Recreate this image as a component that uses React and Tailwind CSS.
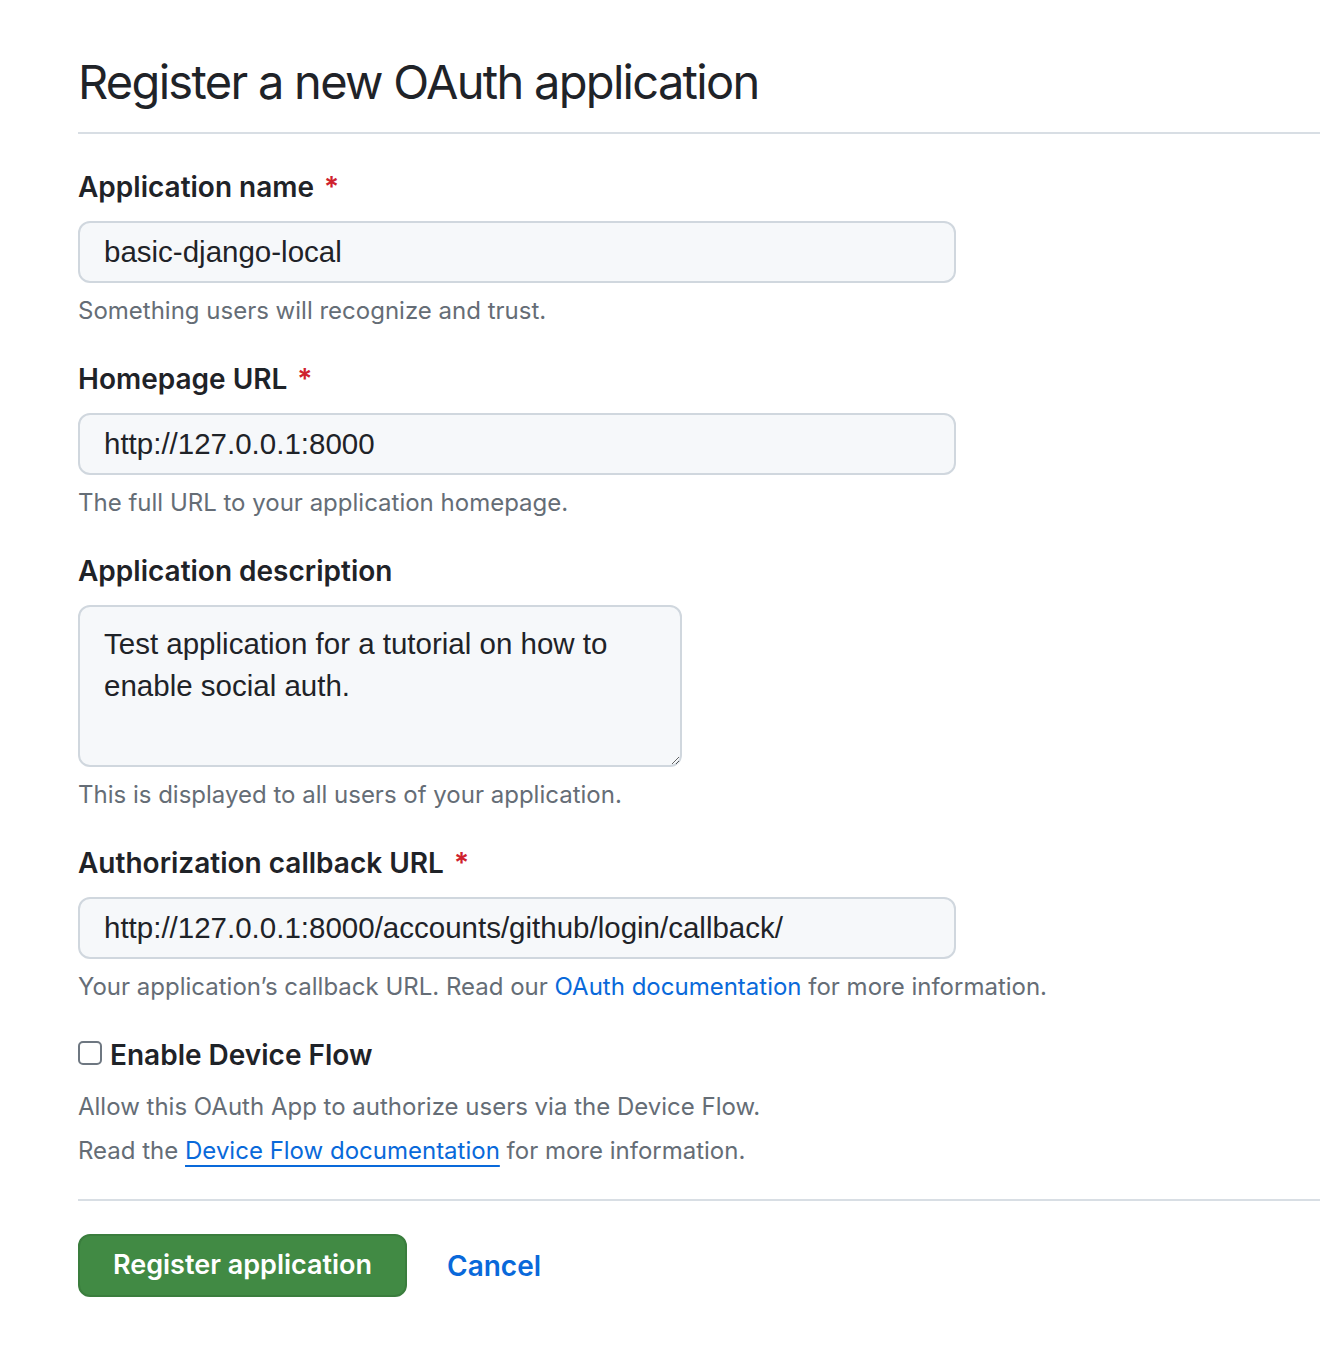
import React from "react";

const inputFont = { fontFamily: "'Liberation Sans', Arial, sans-serif" };

const Label = ({ children, required }) => (
  <label className="flex items-center text-[28px] font-semibold text-[#1f2328] leading-[40px]">
    {children}
    {required && <span className="ml-[10px] text-[#cf222e]">*</span>}
  </label>
);

const Hint = ({ children }) => (
  <p className="mt-[10px] text-[24px] leading-[36px] text-[#656d76]">{children}</p>
);

const TextInput = ({ value }) => (
  <input
    type="text"
    defaultValue={value}
    style={inputFont}
    className="mt-[14px] block h-[62px] w-[878px] rounded-[12px] border-2 border-[#d0d7de] bg-[#f6f8fa] px-[24px] text-[29.5px] text-[#1f2328] outline-none"
  />
);

export default function App() {
  return (
    <div
      className="min-h-[1350px] bg-white pl-[78px] pt-[50px]"
      style={{ fontFamily: "Inter, 'Noto Sans', sans-serif" }}
    >
      <h1 className="text-[47px] font-normal leading-[64px] tracking-[-1.7px] text-[#1f2328]">
        Register a new OAuth application
      </h1>
      <hr className="mt-[18px] border-0 border-t-2 border-[#d8dee4]" />

      <form className="pt-[33px]">
        <div>
          <Label required>Application name</Label>
          <TextInput value="basic-django-local" />
          <Hint>Something users will recognize and trust.</Hint>
        </div>

        <div className="mt-[30px]">
          <Label required>Homepage URL</Label>
          <TextInput value="http://127.0.0.1:8000" />
          <Hint>The full URL to your application homepage.</Hint>
        </div>

        <div className="mt-[30px]">
          <Label>Application description</Label>
          <textarea
            defaultValue="Test application for a tutorial on how to enable social auth."
            style={inputFont}
            className="mt-[14px] block h-[162px] w-[604px] rounded-[12px] border-2 border-[#d0d7de] bg-[#f6f8fa] px-[24px] py-[16px] text-[29.5px] leading-[42px] text-[#1f2328] outline-none"
          />
          <Hint>This is displayed to all users of your application.</Hint>
        </div>

        <div className="mt-[30px]">
          <Label required>Authorization callback URL</Label>
          <TextInput value="http://127.0.0.1:8000/accounts/github/login/callback/" />
          <Hint>
            Your application’s callback URL. Read our{" "}
            <a href="#" className="text-[#0969da]">OAuth documentation</a> for more information.
          </Hint>
        </div>

        <div className="mt-[30px]">
          <label className="flex items-center gap-[8px] text-[28px] font-semibold leading-[40px] text-[#1f2328]">
            <input
              type="checkbox"
              className="-mt-[4px] h-[24px] w-[24px] appearance-none rounded-[5px] border-2 border-[#6e7781] bg-white"
            />
            Enable Device Flow
          </label>
          <p className="mt-[14px] text-[24px] leading-[36px] text-[#656d76]">
            Allow this OAuth App to authorize users via the Device Flow.
          </p>
          <p className="mt-[8px] text-[24px] leading-[36px] text-[#656d76]">
            Read the{" "}
            <a href="#" className="text-[#0969da] underline decoration-2 underline-offset-[6px]">
              Device Flow documentation
            </a>{" "}
            for more information.
          </p>
        </div>

        <hr className="mt-[30px] border-0 border-t-2 border-[#d8dee4]" />

        <div className="mt-[33px] flex items-center gap-[40px]">
          <button
            type="button"
            className="h-[63px] w-[329px] rounded-[12px] border-2 border-[#3a7d3d] bg-[#418a44] text-[27px] font-semibold text-white"
          >
            Register application
          </button>
          <a href="#" className="text-[28px] font-semibold text-[#0969da]">
            Cancel
          </a>
        </div>
      </form>
    </div>
  );
}
